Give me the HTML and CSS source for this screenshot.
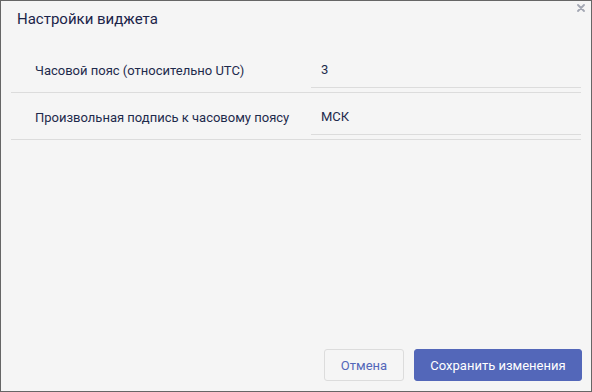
FILE: index.html
```html
<!DOCTYPE html>
<html lang="ru">
<head>
  <meta charset="UTF-8">
  <title>Настройки виджета</title>
  <link rel="stylesheet" href="styles.css">
</head>
<body>
  <div class="dialog">
    <div class="dialog-header">
      <h2 class="dialog-title">Настройки виджета</h2>
      <!-- крестик закрытия -->
      <svg class="close-btn" width="8" height="8" viewBox="0 0 8 8">
        <path d="M1 1L7 7M7 1L1 7" stroke="#a3a7b3" stroke-width="1.8" stroke-linecap="round" fill="none"/>
      </svg>
    </div>

    <div class="settings">
      <div class="setting-row">
        <label class="setting-label">Часовой пояс (относительно UTC)</label>
        <div class="setting-field">3</div>
      </div>
      <div class="setting-row">
        <label class="setting-label">Произвольная подпись к часовому поясу</label>
        <div class="setting-field">МСК</div>
      </div>
    </div>

    <div class="dialog-footer">
      <button class="btn btn-cancel">Отмена</button>
      <button class="btn btn-save">Сохранить изменения</button>
    </div>
  </div>
</body>
</html>
```

FILE: styles.css
```css
:root {
  --bg: #f5f5f5;
  --frame: #666;
  --line: #dcdcdc;
  --text: #1e2a4c;
  --accent: #5367b9;
}

* {
  box-sizing: border-box;
  margin: 0;
  padding: 0;
}

body {
  font-family: Roboto, "Noto Sans", sans-serif;
  background: var(--bg);
}

.dialog {
  position: relative;
  width: 592px;
  height: 392px;
  background: var(--bg);
  border: 1px solid var(--frame);
  display: flex;
  flex-direction: column;
  color: var(--text);
}

/* Шапка */
.dialog-header {
  height: 45px;
  padding: 8px 16px 0;
}
.dialog-title {
  font-size: 15px;
  font-weight: 400;
  line-height: 20px;
  color: #1b2449;
}
.close-btn {
  position: absolute;
  top: 3px;
  right: 6px;
  cursor: pointer;
}

/* Строки настроек */
.settings {
  padding: 0 10px;
}
.setting-row {
  display: flex;
  align-items: center;
  padding: 6px 0 4px;
  border-bottom: 1px solid var(--line);
  font-size: 13px;
}
.setting-label {
  width: 300px;
  padding-left: 24px;
}
.setting-field {
  width: 270px;
  height: 36px;
  line-height: 36px;
  padding-left: 10px;
  border-bottom: 1px solid var(--line);
}

/* Кнопки */
.dialog-footer {
  margin-top: auto;
  display: flex;
  justify-content: flex-end;
  gap: 10px;
  padding: 0 9px 10px;
}
.btn {
  height: 32px;
  font-family: inherit;
  font-size: 13px;
  border-radius: 3px;
  cursor: pointer;
}
.btn-cancel {
  width: 80px;
  background: var(--bg);
  border: 1px solid var(--line);
  color: var(--accent);
}
.btn-save {
  width: 168px;
  background: var(--accent);
  border: 1px solid var(--accent);
  color: #fff;
}
```
